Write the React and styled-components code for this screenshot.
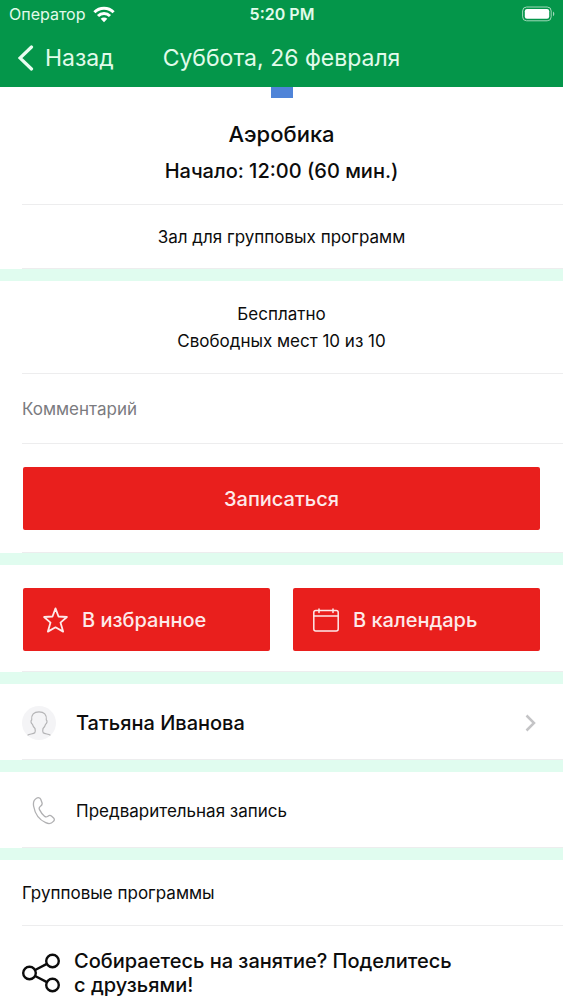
import React, { useState } from 'react';
import styled, { createGlobalStyle } from 'styled-components';

const GlobalStyle = createGlobalStyle`
  * {
    box-sizing: border-box;
  }

  body {
    margin: 0;
    background: #fff;
    color: #0c0c0c;
    font-family: Inter, "Liberation Sans", sans-serif;
  }

  p, h1, h2 {
    margin: 0;
  }
`;

const Header = styled.header`
  background: #04964a;
  color: #e2fbea;
  height: 87px;
`;

const StatusBar = styled.div`
  display: grid;
  grid-template-columns: 1fr auto 1fr;
  align-items: center;
  height: 28px;
  padding: 0 8px 0 9px;
  font-size: 16px;
`;

const Operator = styled.span`
  display: flex;
  align-items: center;
  gap: 8px;
`;

const Clock = styled.span`
  font-weight: 600;
`;

const BatteryIcon = styled.svg`
  justify-self: end;
`;

const NavBar = styled.nav`
  display: grid;
  grid-template-columns: 1fr auto 1fr;
  align-items: center;
  height: 59px;
  padding: 0 18px;
`;

const BackButton = styled.button`
  display: flex;
  align-items: center;
  gap: 11px;
  padding: 0;
  border: none;
  background: transparent;
  color: inherit;
  font-family: inherit;
  font-size: 23px;
  cursor: pointer;
`;

const NavTitle = styled.h1`
  font-size: 23px;
  font-weight: 400;
`;

const Page = styled.main`
  display: flex;
  flex-direction: column;
  gap: 12px;
  background: #e0fcef;
`;

const Section = styled.section`
  background: #fff;
`;

const Divider = styled.hr`
  height: 1px;
  margin: 0 0 0 22px;
  border: none;
  background: #ededee;
`;

const Marker = styled.div`
  width: 22px;
  height: 11px;
  margin: 0 auto;
  background: #4f84d8;
`;

const Summary = styled.div`
  padding: 20px 22px 17px;
  text-align: center;
`;

const ClassName = styled.h2`
  font-size: 22px;
  font-weight: 500;
  line-height: 32px;
`;

const StartTime = styled.p`
  margin-top: 5px;
  font-size: 20px;
  font-weight: 500;
  line-height: 32px;
`;

const Info = styled.div`
  padding: ${props => (props.$compact ? '19px 22px 17px' : '20px 22px 18px')};
  font-size: 17px;
  line-height: 27px;
  text-align: ${props => (props.$left ? 'left' : 'center')};
`;

const CommentInput = styled.input`
  display: block;
  width: 100%;
  height: 69px;
  padding: 0 22px;
  border: none;
  outline: none;
  background: transparent;
  color: #0c0c0c;
  font-family: inherit;
  font-size: 17px;

  &::placeholder {
    color: #7b7b7f;
    opacity: 1;
  }
`;

const Actions = styled.div`
  display: flex;
  gap: 23px;
  padding: ${props => (props.$compact ? '23px 23px 20px' : '23px 23px 22px')};
`;

const ActionButton = styled.button`
  display: flex;
  flex: 1;
  align-items: center;
  justify-content: ${props => (props.$center ? 'center' : 'flex-start')};
  gap: 14px;
  height: 63px;
  padding: 0 20px;
  border: none;
  border-radius: 2px;
  background: #e91f1d;
  color: #fdeaea;
  font-family: inherit;
  font-size: 20px;
  font-weight: 500;
  cursor: pointer;
`;

const Row = styled.a`
  display: flex;
  align-items: center;
  height: 75px;
  padding: 2px 27px 0 22px;
  color: inherit;
  font-size: ${props => (props.$strong ? '20px' : '17px')};
  font-weight: ${props => (props.$strong ? 500 : 400)};
  text-decoration: none;
`;

const RowIcon = styled.span`
  display: flex;
  flex: none;
  width: 54px;
`;

const RowText = styled.span`
  flex: 1;
`;

const Share = styled.a`
  display: flex;
  align-items: center;
  gap: 13px;
  padding: 23px 22px 3px;
  color: inherit;
  font-size: 20px;
  font-weight: 500;
  line-height: 24px;
  text-decoration: none;
`;

const ShareText = styled.span`
  max-width: 386px;
`;

const WifiIcon = () => (
  <svg width="22" height="17" viewBox="0 0 22 17" fill="none" stroke="#fff" strokeWidth="3">
    <path d="M1.4 6.2a13.6 13.6 0 0 1 19.2 0" />
    <path d="M5 10a8.5 8.5 0 0 1 12 0" />
    <path d="M11 16.2 7.7 12.8a4.7 4.7 0 0 1 6.6 0Z" fill="#fff" stroke="none" />
  </svg>
);

const Battery = () => (
  <BatteryIcon width="33" height="16" viewBox="0 0 33 16">
    <rect x="0.6" y="1" width="28.6" height="13.8" rx="4" fill="none" stroke="#a0d9b9" />
    <rect x="2.8" y="3" width="24.4" height="9.8" rx="2.2" fill="#fff" />
    <path d="M31 5.6c1.8.8 1.8 3.8 0 4.6Z" fill="#a0d9b9" />
  </BatteryIcon>
);

const BackIcon = () => (
  <svg width="16" height="26" viewBox="0 0 16 26" fill="none" stroke="#e8fdf0" strokeWidth="3.2" strokeLinecap="round">
    <path d="M13.5 2 2 13l11.5 11" />
  </svg>
);

const StarIcon = () => (
  <svg width="25" height="26" viewBox="0 0 25 26" fill="none" stroke="#fdeaea" strokeWidth="1.8" strokeLinejoin="round">
    <path d="m12.5 1.4 3 8.1 8.4.5-6.4 5.6 2.6 9-7.6-4.3-7.6 4.3 2.6-9L1.1 10l8.4-.5Z" />
  </svg>
);

const CalendarIcon = () => (
  <svg width="26" height="24" viewBox="0 0 26 24" fill="none" stroke="#fdeaea" strokeWidth="1.5" strokeLinecap="round">
    <rect x="0.8" y="2.4" width="24.4" height="20.6" rx="2" />
    <path d="M1 8h24M6 1v3.500M20 1v3.500" />
  </svg>
);

const AvatarIcon = () => (
  <svg width="34" height="36" viewBox="0 0 34 36" fill="none" stroke="#b4b4b6" strokeWidth="1.2" strokeLinejoin="round" strokeLinecap="round">
    <circle cx="17" cy="18" r="17" fill="#f4f4f6" stroke="none" />
    <path d="M6 30c1.5-1 5.5-1 6.8-2.2.8-.9.5-2.9.2-4.3-1.5-1.2-2.2-2.600-2.600-4.300-1.400-.8-2-3.600-.7-4.200C9 9.500 12 6.800 17 6.800s8 2.700 7.300 8.200c1.300.6.7 3.400-.7 4.200-.4 1.700-1.100 3.100-2.600 4.300-.3 1.400-.6 3.400.2 4.300C22.500 29 26.500 29 28 30" />
  </svg>
);

const PhoneIcon = () => (
  <svg width="44" height="28" viewBox="0 0 44 28" fill="none" stroke="#b0b0b2" strokeWidth="1.3" strokeLinejoin="round">
    <path d="M14.500 1.200c1.500-.9 3.500-.5 4.200 1l1.300 3.500c.5 1.500-.2 2.600-1.500 3.500-1.400 1-1.700 2-1 3.400 1.200 2.500 3 4.900 5 6.600 1.100.9 2.200.9 3.400 0 1.300-1 2.600-1 3.800 0l1.900 1.700c1.100 1 .9 2.400-.2 3.500-1.700 2-4.900 2.600-7.700 1.300-6.500-3-10.800-9.400-12-16.200-.7-3.600.2-6.800 2.800-8.300Z" />
  </svg>
);

const ChevronIcon = () => (
  <svg width="11" height="18" viewBox="0 0 11 18" fill="none" stroke="#c4c4c6" strokeWidth="2.5">
    <path d="m1.5 1.5 7.5 7.5-7.5 7.5" />
  </svg>
);

const ShareIcon = () => (
  <svg width="39" height="40" viewBox="0 0 39 40" fill="none" stroke="#0c0c0c" strokeWidth="2.4">
    <circle cx="7.500" cy="20" r="6.300" />
    <circle cx="30.500" cy="8" r="6.300" />
    <circle cx="30.500" cy="32" r="6.300" />
    <path d="m13.100 17 11.800-6.100M13.100 23l11.800 6.100" />
  </svg>
);

const App = () => {
  const [comment, setComment] = useState('');

  return (
    <>
      <GlobalStyle />
      <Header>
        <StatusBar>
          <Operator>
            Оператор
            <WifiIcon />
          </Operator>
          <Clock>5:20 PM</Clock>
          <Battery />
        </StatusBar>
        <NavBar>
          <BackButton type="button">
            <BackIcon />
            Назад
          </BackButton>
          <NavTitle>Суббота, 26 февраля</NavTitle>
        </NavBar>
      </Header>

      <Page>
        <Section>
          <Marker />
          <Summary>
            <ClassName>Аэробика</ClassName>
            <StartTime>Начало: 12:00 (60 мин.)</StartTime>
          </Summary>
          <Divider />
          <Info $compact>Зал для групповых программ</Info>
          <Divider />
        </Section>

        <Section>
          <Info>
            <p>Бесплатно</p>
            <p>Свободных мест 10 из 10</p>
          </Info>
          <Divider />
          <CommentInput
            aria-label="Комментарий"
            placeholder="Комментарий"
            value={comment}
            onChange={e => setComment(e.target.value)}
          />
          <Divider />
          <Actions>
            <ActionButton type="button" $center>Записаться</ActionButton>
          </Actions>
          <Divider />
        </Section>

        <Section>
          <Actions $compact>
            <ActionButton type="button">
              <StarIcon />
              В избранное
            </ActionButton>
            <ActionButton type="button">
              <CalendarIcon />
              В календарь
            </ActionButton>
          </Actions>
          <Divider />
        </Section>

        <Section>
          <Row href="#trainer" $strong>
            <RowIcon><AvatarIcon /></RowIcon>
            <RowText>Татьяна Иванова</RowText>
            <ChevronIcon />
          </Row>
          <Divider />
        </Section>

        <Section>
          <Row href="#phone">
            <RowIcon><PhoneIcon /></RowIcon>
            <RowText>Предварительная запись</RowText>
          </Row>
          <Divider />
        </Section>

        <Section>
          <Info $left>Групповые программы</Info>
          <Divider />
          <Share href="#share">
            <ShareIcon />
            <ShareText>Собираетесь на занятие? Поделитесь с друзьями!</ShareText>
          </Share>
        </Section>
      </Page>
    </>
  );
};

export default App;
